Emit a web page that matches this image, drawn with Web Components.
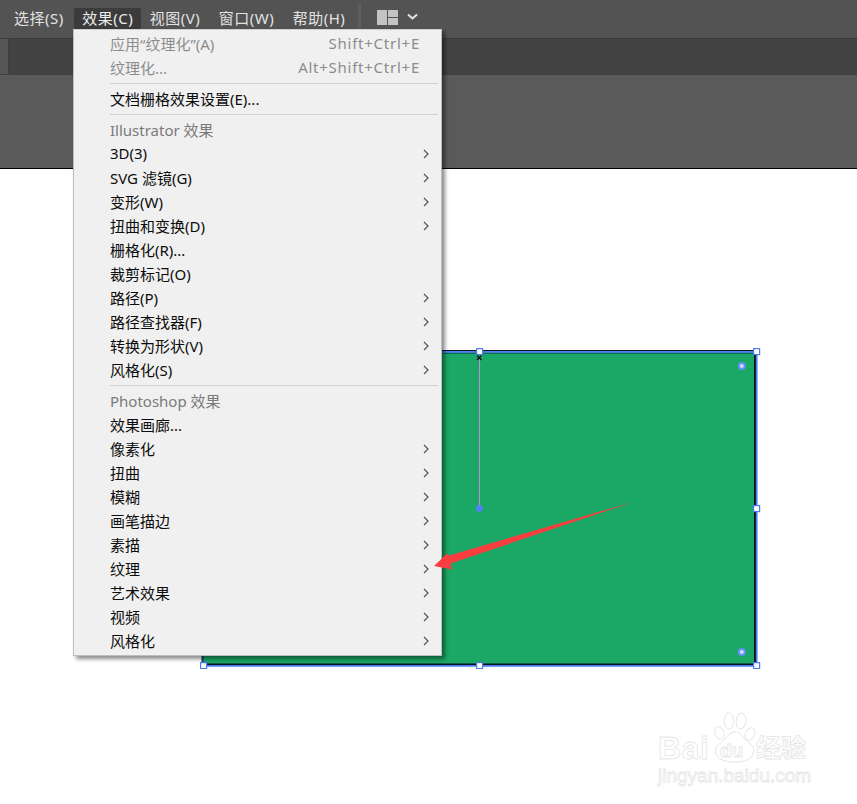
<!DOCTYPE html>
<html lang="zh"><head><meta charset="utf-8"><title>Illustrator 效果菜单</title>
<style>
html,body{margin:0;padding:0;background:#fff;height:100%;overflow:hidden}
body{font:15px "Noto Sans","Noto Sans CJK SC",sans-serif}
</style></head><body>
<x-app>
  <x-menubar>
    <x-bar-item style="margin-left:6px">选择(S)</x-bar-item>
    <x-bar-item active style="margin-left:2.500px">效果(C)</x-bar-item>
    <x-bar-item style="margin-left:.5px">视图(V)</x-bar-item>
    <x-bar-item style="margin-left:2.500px">窗口(W)</x-bar-item>
    <x-bar-item style="margin-left:2.500px">帮助(H)</x-bar-item>
  </x-menubar>
  <x-tabbar></x-tabbar>
  <x-controlbar></x-controlbar>
  <x-canvas>
    <x-artboard></x-artboard>
  </x-canvas>
  <x-menu>
    <x-menu-item disabled shortcut="Shift+Ctrl+E">应用“纹理化”(A)</x-menu-item>
    <x-menu-item disabled shortcut="Alt+Shift+Ctrl+E">纹理化...</x-menu-item>
    <x-menu-sep></x-menu-sep>
    <x-menu-item>文档栅格效果设置(E)...</x-menu-item>
    <x-menu-sep></x-menu-sep>
    <x-menu-item heading>Illustrator 效果</x-menu-item>
    <x-menu-item sub>3D(3)</x-menu-item>
    <x-menu-item sub>SVG 滤镜(G)</x-menu-item>
    <x-menu-item sub>变形(W)</x-menu-item>
    <x-menu-item sub>扭曲和变换(D)</x-menu-item>
    <x-menu-item>栅格化(R)...</x-menu-item>
    <x-menu-item>裁剪标记(O)</x-menu-item>
    <x-menu-item sub>路径(P)</x-menu-item>
    <x-menu-item sub>路径查找器(F)</x-menu-item>
    <x-menu-item sub>转换为形状(V)</x-menu-item>
    <x-menu-item sub>风格化(S)</x-menu-item>
    <x-menu-sep></x-menu-sep>
    <x-menu-item heading>Photoshop 效果</x-menu-item>
    <x-menu-item>效果画廊...</x-menu-item>
    <x-menu-item sub>像素化</x-menu-item>
    <x-menu-item sub>扭曲</x-menu-item>
    <x-menu-item sub>模糊</x-menu-item>
    <x-menu-item sub>画笔描边</x-menu-item>
    <x-menu-item sub>素描</x-menu-item>
    <x-menu-item sub>纹理</x-menu-item>
    <x-menu-item sub>艺术效果</x-menu-item>
    <x-menu-item sub>视频</x-menu-item>
    <x-menu-item sub>风格化</x-menu-item>
  </x-menu>
  <x-arrow></x-arrow>
  <x-watermark></x-watermark>
</x-app>
<script>
const FONT='"Noto Sans","Noto Sans CJK SC",sans-serif';
function def(name,css,html,extra){
  customElements.define(name,class extends HTMLElement{
    constructor(){super();this.attachShadow({mode:'open'});
      this.shadowRoot.innerHTML='<style>'+css+'</style>'+html;}
    connectedCallback(){ if(extra) extra(this); }
  });
}
def('x-app',`:host{display:flex;flex-direction:column;position:relative;width:857px;height:804px;overflow:hidden;font-family:${FONT}}`,'<slot></slot>');
def('x-menubar',`:host{display:flex;align-items:center;flex:none;box-sizing:border-box;height:39px;background:#535353;border-bottom:1px solid #3c3c3c;padding-bottom:2px}
 .div{width:3px;height:30px;background:#5d5d5d;margin-left:5px}
 svg{display:block}`,
 `<slot></slot><div class="div"></div>
 <svg width="46" height="20" viewBox="0 0 46 20" style="margin-left:15px">
  <rect x="1" y="2" width="10" height="15" fill="#c3c3c3"/><rect x="12" y="2" width="10" height="7" fill="#c3c3c3"/><rect x="12" y="10" width="10" height="7" fill="#c3c3c3"/>
  <path d="M32 6.500l4.500 4 4.500-4" fill="none" stroke="#e6e6e6" stroke-width="2"/></svg>`);
def('x-bar-item',`:host{display:block;padding:0 8px;height:21px;line-height:21px;color:#e2e2e2;font-size:15px;letter-spacing:.5px;white-space:nowrap;border-radius:2px}
 :host([active]){background:#3b3b3b;color:#ececec}`,'<slot></slot>');
def('x-tabbar',`:host{display:block;flex:none;height:36px;background:#434343;box-sizing:border-box;border-bottom:1px solid #3f3f3f}
 div{width:8px;height:100%;background:#555;border-right:1px solid #3e3e3e}`,'<div></div>');
def('x-controlbar',`:host{display:block;flex:none;height:93px;background:#5a5a5a;border-bottom:1px solid #000}`,'');
def('x-canvas',`:host{display:block;flex:1;position:relative;background:#fff}`,'<slot></slot>');
def('x-artboard',`:host{display:block;position:absolute;left:199px;top:178px;width:562px;height:322px}svg{display:block}`,
 `<svg width="562" height="322" viewBox="199 347 562 322">
  <rect x="203" y="351" width="553" height="314" fill="#1ba866"/>
  <path d="M755 350.500V664.500H202.500V350.500" fill="none" stroke="#0a1420" stroke-width="2"/>
  <path d="M202 350.500H756" fill="none" stroke="#0a1420" stroke-width="1"/>
  <path d="M204 353.200H755" fill="none" stroke="#0d3a3c" stroke-width=".8"/>
  <path d="M203 351.900H756.700V665.900H203" fill="none" stroke="#4a7bf0" stroke-width="1.700"/>
  <path d="M202.800 352V665" fill="none" stroke="#3a63c8" stroke-width="1"/>
  <line x1="479.500" y1="357" x2="479.500" y2="507" stroke="#c58ad8" stroke-width="1"/>
  <path d="M477 355.500l4.500 4.500M481.500 355.500l-4.500 4.500" stroke="#111" stroke-width="1.400"/>
  <circle cx="479.300" cy="508.500" r="3.400" fill="#4d83f6"/>
  <circle cx="741.800" cy="366" r="3" fill="#cfdcff" stroke="#628ff8" stroke-width="2"/>
  <circle cx="741.800" cy="652" r="3" fill="#cfdcff" stroke="#628ff8" stroke-width="2"/>
  <g fill="#fff" stroke="#4a7bf0" stroke-width="1.200">
   <rect x="476.600" y="348.600" width="6" height="6"/><rect x="753.600" y="348.600" width="6" height="6"/>
   <rect x="753.600" y="505.600" width="6" height="6"/><rect x="476.600" y="662.600" width="6" height="6"/>
   <rect x="753.600" y="662.600" width="6" height="6"/><rect x="200.600" y="662.600" width="6" height="6"/>
  </g></svg>`);
def('x-menu',`:host{display:block;position:absolute;left:73px;top:29px;width:369px;height:627px;box-sizing:border-box;padding:2px 1px;background:#f0f0f0;border:1px solid #bdbdbd;border-top-color:#d0d0d0;box-shadow:3px 3px 4px rgba(0,0,0,.45);color:#000;font-size:15px}`,'<slot></slot>');
def('x-menu-item',`:host{display:flex;align-items:center;height:24px;box-sizing:border-box;padding:0 0 2px 35px;position:relative;white-space:nowrap;color:#0c0c0c}
 :host([disabled]){color:#8c8c8c}
 :host([heading]){color:#7a7a7a}
 .s{margin-left:auto;margin-right:20px;color:#8c8c8c;letter-spacing:.75px}
 svg{position:absolute;right:11px;top:7px}`,
 `<slot></slot>`,
 el=>{
  if(el._done) return; el._done=1;
  const s=el.getAttribute('shortcut');
  if(s){const d=document.createElement('span');d.className='s';d.textContent=s;el.shadowRoot.appendChild(d);}
  if(el.hasAttribute('sub')){const t=document.createElement('template');
   t.innerHTML='<svg width="6" height="10" viewBox="0 0 6 10"><path d="M1 1l4 4-4 4" fill="none" stroke="#555" stroke-width="1.200"/></svg>';
   el.shadowRoot.appendChild(t.content);}
 });
def('x-menu-sep',`:host{display:block;height:7px;box-sizing:border-box;padding:3px 2px 0 35px}
 div{height:1px;background:#d2d2d2}`,'<div></div>');
def('x-arrow',`:host{display:block;position:absolute;left:430px;top:498px;width:206px;height:76px;pointer-events:none}svg{display:block}`,
 `<svg width="206" height="76" viewBox="430 498 206 76"><polygon fill="#fb3d3f" points="434,566 447,553.500 449,555.500 633,502 450.500,563.500 452,569.500"/></svg>`);
def('x-watermark',`:host{display:block;position:absolute;left:655px;top:710px;width:165px;height:80px;pointer-events:none;font-family:"Liberation Sans",sans-serif}
 svg{position:absolute;left:59px;top:1px}
 .t{position:absolute;color:#fff;-webkit-text-stroke:.8px #e6e6e6;white-space:nowrap}
 .b{left:3px;top:20px;font-size:32px;font-weight:700;line-height:36px;letter-spacing:.6px}
 .c{left:101px;top:21px;font:700 25px/30px "Noto Sans CJK SC",sans-serif;}
 .d{left:65px;top:30px;font-size:19px;line-height:22px;font-weight:700}
 .u{left:3px;top:55px;font-size:19px;line-height:22px}`,
 `<svg width="44" height="54" viewBox="0 0 44 54"><g fill="#fff" stroke="#e6e6e6" stroke-width="1">
   <ellipse cx="5.500" cy="22" rx="4.500" ry="6.500" transform="rotate(-25 5.500 22)"/><ellipse cx="15" cy="10" rx="4.800" ry="8"/><ellipse cx="27" cy="10" rx="4.800" ry="8" transform="rotate(8 27 10)"/><ellipse cx="36" cy="23" rx="4.500" ry="6.500" transform="rotate(25 36 23)"/>
   <path d="M21 21c6 0 7 5 12 9 5 4 8 7 6 13-2 5-7 8-18 8s-17-3-19-8c-2-6 2-9 7-13 5-4 6-9 12-9z"/></g></svg>
  <span class="t b">Bai</span><span class="t c">经验</span>
  <span class="t d">du</span>
  <span class="t u">jingyan.baidu.com</span>`);
</script>
</body></html>
